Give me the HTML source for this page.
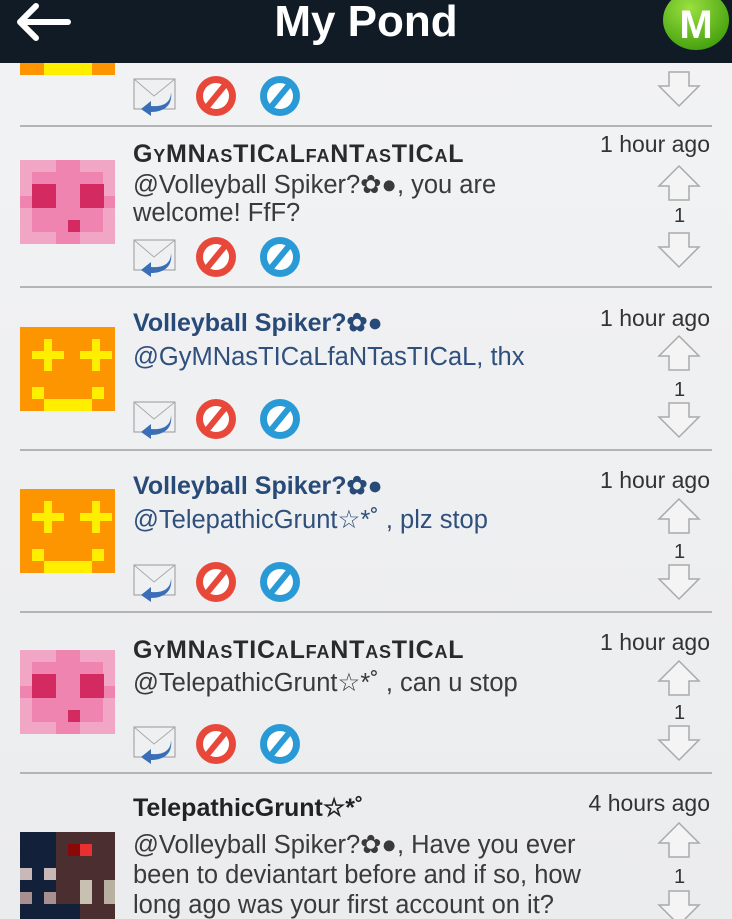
<!DOCTYPE html>
<html style="overflow:hidden;height:919px"><head><meta charset="utf-8"><style>
body{margin:0;width:732px;height:919px;overflow:hidden;background:linear-gradient(#f2f3f4,#ebecee);font-family:"Liberation Sans",sans-serif;position:relative}
.hdr{position:absolute;left:0;top:0;width:732px;height:63px;background:#111b25}
.hdr h1{margin:0;position:absolute;left:0;width:732px;text-align:center;top:-2px;font-size:44px;color:#fff;font-weight:bold;line-height:48px}
.e{position:absolute;left:0;width:732px;height:161px}
.sep{position:absolute;left:20px;width:692px;top:159px;height:2px;background:#b4b4b4}
.name{position:absolute;left:133px;font-size:25px;font-weight:bold;white-space:nowrap}
.g{color:#2a2a2a;font-variant:small-caps;letter-spacing:0.8px;font-size:25px}
.v{color:#284a78}
.t{color:#222}
.body{position:absolute;left:133px;font-size:25.5px;color:#3a3a3a;line-height:28px;width:500px;white-space:nowrap}
.time{position:absolute;right:22px;font-size:23px;color:#333}
.num{position:absolute;left:674px;font-size:20px;color:#333}
.ic{position:absolute;left:133px}
.av{position:absolute;left:20px;width:95px;height:84px}
.arr{position:absolute;left:657px}
</style></head><body>
<svg width="0" height="0" style="position:absolute"><defs>
<g id="up"><path d="M22 2 L42 22 L32 22 L32 36 L12 36 L12 22 L2 22 Z" fill="#f4f4f4" stroke="#aaa" stroke-width="1.5"/></g>
<g id="dn"><path d="M22 36 L42 16 L32 16 L32 2 L12 2 L12 16 L2 16 Z" fill="#f4f4f4" stroke="#aaa" stroke-width="1.5"/></g>
<g id="icons">
<rect x="1" y="5" width="41" height="30" fill="#eef0f2" stroke="#999"/><path d="M1 5 L21 22 L42 5" fill="none" stroke="#aaa"/>
<path d="M38 18 C38 30 28 33 18 32 L18 27 L8 35 L18 42 L18 38 C30 38 40 32 38 18Z" fill="#3a6fb8"/>
<circle cx="83" cy="22" r="20" fill="#e8483a"/><circle cx="83" cy="22" r="13" fill="#fff"/><path d="M74 33 L92 11" stroke="#e8483a" stroke-width="6"/>
<circle cx="147" cy="22" r="20" fill="#2a9ad6"/><circle cx="147" cy="22" r="13" fill="#fff"/><path d="M138 33 L156 11" stroke="#2a9ad6" stroke-width="6"/>
</g>
<g id="pink"><rect width="95" height="84" fill="#f0a6c4"/><rect x="12" y="12" width="71" height="60" fill="#ef84b0"/><rect x="36" y="0" width="24" height="84" fill="#ef84b0"/><rect x="0" y="36" width="95" height="12" fill="#ef84b0"/><rect x="12" y="24" width="24" height="24" fill="#d42a62"/><rect x="60" y="24" width="24" height="24" fill="#d42a62"/><rect x="48" y="60" width="12" height="12" fill="#d42a62"/></g>
<g id="orange"><rect width="95" height="84" fill="#fd9500"/><path d="M24 12h8v12h12v8h-12v12h-8v-12h-12v-8h12z M72 12h8v12h12v8h-12v12h-8v-12h-12v-8h12z" fill="#ffee00"/><rect x="12" y="60" width="12" height="12" fill="#ffee00"/><rect x="72" y="60" width="12" height="12" fill="#ffee00"/><rect x="24" y="72" width="48" height="12" fill="#ffee00"/></g>
</defs></svg>

<div class="e" style="top:-34px">
<svg class="av" style="top:0;height:109px" viewBox="0 -25 95 109"><use href="#orange"/></svg>
<svg class="ic" style="top:108px" width="170" height="44"><use href="#icons"/></svg>
<svg class="arr" style="top:104px" width="44" height="40"><use href="#dn"/></svg>
<div class="sep"></div></div>

<div class="e" style="top:127px">
<div class="time" style="top:4px">1 hour ago</div>
<div class="name g" style="top:13px">GyMNasTICaLfaNTasTICaL</div>
<div class="body" style="top:44px">@Volleyball Spiker?✿●, you are<br>welcome! FfF?</div>
<svg class="av" style="top:33px"><use href="#pink"/></svg>
<svg class="ic" style="top:108px" width="170" height="44"><use href="#icons"/></svg>
<svg class="arr" style="top:37px" width="44" height="40"><use href="#up"/></svg>
<div class="num" style="top:78px">1</div>
<svg class="arr" style="top:104px" width="44" height="40"><use href="#dn"/></svg>
<div class="sep"></div></div>

<div class="e" style="top:289px">
<div class="time" style="top:16px">1 hour ago</div>
<div class="name v" style="top:19px">Volleyball Spiker?✿●</div>
<div class="body v" style="top:54px;color:#2f4f7c">@GyMNasTICaLfaNTasTICaL, thx</div>
<svg class="av" style="top:38px"><use href="#orange"/></svg>
<svg class="ic" style="top:108px" width="170" height="44"><use href="#icons"/></svg>
<svg class="arr" style="top:45px" width="44" height="40"><use href="#up"/></svg>
<div class="num" style="top:90px">1</div>
<svg class="arr" style="top:112px" width="44" height="40"><use href="#dn"/></svg>
<div class="sep" style="top:160px"></div></div>

<div class="e" style="top:450px">
<div class="time" style="top:17px">1 hour ago</div>
<div class="name v" style="top:21px">Volleyball Spiker?✿●</div>
<div class="body" style="top:56px;color:#2f4f7c">@TelepathicGrunt☆*˚ , plz stop</div>
<svg class="av" style="top:39px"><use href="#orange"/></svg>
<svg class="ic" style="top:110px" width="170" height="44"><use href="#icons"/></svg>
<svg class="arr" style="top:47px" width="44" height="40"><use href="#up"/></svg>
<div class="num" style="top:91px">1</div>
<svg class="arr" style="top:113px" width="44" height="40"><use href="#dn"/></svg>
<div class="sep" style="top:161px"></div></div>

<div class="e" style="top:612px">
<div class="time" style="top:17px">1 hour ago</div>
<div class="name g" style="top:24px">GyMNasTICaLfaNTasTICaL</div>
<div class="body" style="top:57px">@TelepathicGrunt☆*˚ , can u stop</div>
<svg class="av" style="top:38px"><use href="#pink"/></svg>
<svg class="ic" style="top:110px" width="170" height="44"><use href="#icons"/></svg>
<svg class="arr" style="top:47px" width="44" height="40"><use href="#up"/></svg>
<div class="num" style="top:90px">1</div>
<svg class="arr" style="top:112px" width="44" height="40"><use href="#dn"/></svg>
<div class="sep" style="top:160px"></div></div>

<div class="e" style="top:773px;height:146px;overflow:hidden">
<div class="time" style="top:17px">4 hours ago</div>
<div class="name t" style="top:20px">TelepathicGrunt☆*˚</div>
<div class="body" style="top:57px;line-height:30px">@Volleyball Spiker?✿●, Have you ever<br>been to deviantart before and if so, how<br>long ago was your first account on it?</div>
<svg class="av" style="top:59px;height:87px" viewBox="0 0 95 87" preserveAspectRatio="none"><rect width="95" height="87" fill="#12203a"/><rect x="36" y="0" width="60" height="87" fill="#4a2e30"/><rect x="48" y="12" width="12" height="12" fill="#8a0808"/><rect x="60" y="12" width="12" height="12" fill="#e83030"/><rect x="0" y="36" width="12" height="12" fill="#c8b8b8"/><rect x="24" y="36" width="12" height="12" fill="#c8b8b8"/><rect x="0" y="60" width="12" height="12" fill="#a89090"/><rect x="24" y="60" width="12" height="12" fill="#a89090"/><rect x="60" y="48" width="12" height="24" fill="#c8c0b0"/><rect x="84" y="48" width="12" height="24" fill="#b8b0a0"/><rect x="12" y="72" width="48" height="15" fill="#12203a"/></svg>
<svg class="arr" style="top:48px" width="44" height="40"><use href="#up"/></svg>
<div class="num" style="top:93px">1</div>
<svg class="arr" style="top:116px" width="44" height="40"><use href="#dn"/></svg>
</div>

<div class="hdr"><h1>My Pond</h1>
<svg style="position:absolute;left:14px;top:2px" width="58" height="40"><path d="M6 20 H54 M6 20 L22 4 M6 20 L22 36" stroke="#fff" stroke-width="6" fill="none" stroke-linecap="round"/></svg>
<svg style="position:absolute;left:660px;top:0" width="72" height="50"><defs><radialGradient id="gg" cx="0.4" cy="0.3" r="0.8"><stop offset="0" stop-color="#9be040"/><stop offset="1" stop-color="#3c9a0a"/></radialGradient></defs><ellipse cx="36" cy="20" rx="33" ry="30" fill="url(#gg)"/><text x="36" y="38" text-anchor="middle" font-family="Liberation Sans" font-weight="bold" font-size="40" fill="#fff">M</text></svg>
</div>
</body></html>
